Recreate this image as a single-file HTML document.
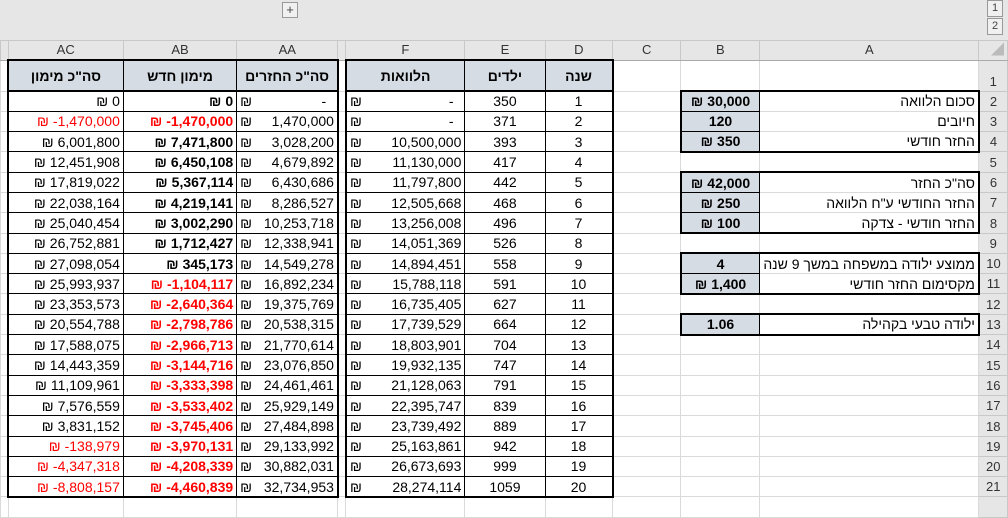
<!DOCTYPE html>
<html><head><meta charset="utf-8"><style>
body{margin:0;width:1008px;height:502px;overflow:hidden;background:#fff;font-family:"Liberation Sans",Arial,"Noto Sans CJK SC",sans-serif;position:relative}
.top{position:absolute;left:0;top:0;width:1008px;height:40px;background:#e6e6e6}
.plus{position:absolute;left:282px;top:2px;width:14px;height:14px;border:1px solid #999;background:#f0f0f0;font-size:13px;line-height:14px;text-align:center;color:#444}
.lvl{position:absolute;left:987px;width:14px;height:15px;border:1px solid #999;background:#f0f0f0;font-size:11px;line-height:15px;text-align:center;color:#444}
table{position:absolute;left:0;top:40px;border-collapse:collapse;table-layout:fixed;direction:ltr}
td{padding:0 3px;white-space:nowrap;overflow:hidden;font-size:14px;height:20.3px;border:1px solid #dadada;box-sizing:border-box;line-height:18px}
tr.h td{height:18px;background:#e6e6e6;color:#333;text-align:center;font-size:13px;border-color:#c8c8c8;border-bottom:1px solid #aaa}
tr.r1 td{height:31px}
td.n{background:#e6e6e6;text-align:center;color:#333;font-size:13px;border-color:#c8c8c8;vertical-align:bottom}
.hd{background:#d6dce4!important;font-weight:bold;text-align:center;font-size:14px}
.t{border:1px solid #000}
.R{text-align:right}.C{text-align:center}.b{font-weight:bold}.red{color:#f00}
.s{float:left}
i{font-style:normal;display:inline-block;margin-right:4px}
.BL{border-left:2px solid #000}.BR{border-right:2px solid #000}.BT{border-top:2px solid #000}.BB{border-bottom:2px solid #000}
.g{background:#d6dce4;font-weight:bold;text-align:center}
.A{text-align:right;direction:rtl}
</style></head><body>
<div class="top"></div>
<div class="plus">+</div>
<div class="lvl" style="top:0">1</div>
<div class="lvl" style="top:18px">2</div>
<table>
<colgroup><col style="width:5px"><col style="width:117px"><col style="width:115px"><col style="width:102px"><col style="width:4px"><col style="width:122px"><col style="width:83px"><col style="width:70px"><col style="width:72px"><col style="width:80px"><col style="width:209px"><col style="width:29px"></colgroup>
<tr class="h"><td></td><td>AC</td><td>AB</td><td>AA</td><td></td><td>F</td><td>E</td><td>D</td><td>C</td><td>B</td><td>A</td><td style="color:#bbb;text-align:right">◢</td></tr>
<tr class="r1"><td></td><td class="hd t BL BT BB">סה"כ מימון</td><td class="hd t BT BB">מימון חדש</td><td class="hd t BT BB BR">סה"כ החזרים</td><td></td><td class="hd t BL BT BB">הלוואות</td><td class="hd t BT BB">ילדים</td><td class="hd t BT BB BR">שנה</td><td></td><td></td><td></td><td class="n">1</td></tr>
<tr><td></td><td class="t BL R"><i>₪</i>0</td><td class="t R b"><i>₪</i>0</td><td class="t R BR"><span class="s">₪</span>-&nbsp;&nbsp;</td><td></td><td class="t BL R"><span class="s">₪</span>-&nbsp;&nbsp;</td><td class="t C">350</td><td class="t C BR">1</td><td></td><td class="g t BL BT"><i>₪</i>30,000</td><td class="A BT BR">סכום הלוואה</td><td class="n">2</td></tr>
<tr><td></td><td class="t BL R red"><i>₪</i>-1,470,000</td><td class="t R b red"><i>₪</i>-1,470,000</td><td class="t R BR"><span class="s">₪</span>1,470,000</td><td></td><td class="t BL R"><span class="s">₪</span>-&nbsp;&nbsp;</td><td class="t C">371</td><td class="t C BR">2</td><td></td><td class="g t BL">120</td><td class="A BR">חיובים</td><td class="n">3</td></tr>
<tr><td></td><td class="t BL R"><i>₪</i>6,001,800</td><td class="t R b"><i>₪</i>7,471,800</td><td class="t R BR"><span class="s">₪</span>3,028,200</td><td></td><td class="t BL R"><span class="s">₪</span>10,500,000</td><td class="t C">393</td><td class="t C BR">3</td><td></td><td class="g t BL BB"><i>₪</i>350</td><td class="A BR BB">החזר חודשי</td><td class="n">4</td></tr>
<tr><td></td><td class="t BL R"><i>₪</i>12,451,908</td><td class="t R b"><i>₪</i>6,450,108</td><td class="t R BR"><span class="s">₪</span>4,679,892</td><td></td><td class="t BL R"><span class="s">₪</span>11,130,000</td><td class="t C">417</td><td class="t C BR">4</td><td></td><td></td><td></td><td class="n">5</td></tr>
<tr><td></td><td class="t BL R"><i>₪</i>17,819,022</td><td class="t R b"><i>₪</i>5,367,114</td><td class="t R BR"><span class="s">₪</span>6,430,686</td><td></td><td class="t BL R"><span class="s">₪</span>11,797,800</td><td class="t C">442</td><td class="t C BR">5</td><td></td><td class="g t BL BT"><i>₪</i>42,000</td><td class="A BT BR">סה"כ החזר</td><td class="n">6</td></tr>
<tr><td></td><td class="t BL R"><i>₪</i>22,038,164</td><td class="t R b"><i>₪</i>4,219,141</td><td class="t R BR"><span class="s">₪</span>8,286,527</td><td></td><td class="t BL R"><span class="s">₪</span>12,505,668</td><td class="t C">468</td><td class="t C BR">6</td><td></td><td class="g t BL"><i>₪</i>250</td><td class="A BR">החזר החודשי ע"ח הלוואה</td><td class="n">7</td></tr>
<tr><td></td><td class="t BL R"><i>₪</i>25,040,454</td><td class="t R b"><i>₪</i>3,002,290</td><td class="t R BR"><span class="s">₪</span>10,253,718</td><td></td><td class="t BL R"><span class="s">₪</span>13,256,008</td><td class="t C">496</td><td class="t C BR">7</td><td></td><td class="g t BL BB"><i>₪</i>100</td><td class="A BR BB">החזר חודשי - צדקה</td><td class="n">8</td></tr>
<tr><td></td><td class="t BL R"><i>₪</i>26,752,881</td><td class="t R b"><i>₪</i>1,712,427</td><td class="t R BR"><span class="s">₪</span>12,338,941</td><td></td><td class="t BL R"><span class="s">₪</span>14,051,369</td><td class="t C">526</td><td class="t C BR">8</td><td></td><td></td><td></td><td class="n">9</td></tr>
<tr><td></td><td class="t BL R"><i>₪</i>27,098,054</td><td class="t R b"><i>₪</i>345,173</td><td class="t R BR"><span class="s">₪</span>14,549,278</td><td></td><td class="t BL R"><span class="s">₪</span>14,894,451</td><td class="t C">558</td><td class="t C BR">9</td><td></td><td class="g t BL BT">4</td><td class="A BT BR">ממוצע ילודה במשפחה במשך 9 שנה</td><td class="n">10</td></tr>
<tr><td></td><td class="t BL R"><i>₪</i>25,993,937</td><td class="t R b red"><i>₪</i>-1,104,117</td><td class="t R BR"><span class="s">₪</span>16,892,234</td><td></td><td class="t BL R"><span class="s">₪</span>15,788,118</td><td class="t C">591</td><td class="t C BR">10</td><td></td><td class="g t BL BB"><i>₪</i>1,400</td><td class="A BR BB">מקסימום החזר חודשי</td><td class="n">11</td></tr>
<tr><td></td><td class="t BL R"><i>₪</i>23,353,573</td><td class="t R b red"><i>₪</i>-2,640,364</td><td class="t R BR"><span class="s">₪</span>19,375,769</td><td></td><td class="t BL R"><span class="s">₪</span>16,735,405</td><td class="t C">627</td><td class="t C BR">11</td><td></td><td></td><td></td><td class="n">12</td></tr>
<tr><td></td><td class="t BL R"><i>₪</i>20,554,788</td><td class="t R b red"><i>₪</i>-2,798,786</td><td class="t R BR"><span class="s">₪</span>20,538,315</td><td></td><td class="t BL R"><span class="s">₪</span>17,739,529</td><td class="t C">664</td><td class="t C BR">12</td><td></td><td class="g t BL BT BB">1.06</td><td class="A BT BR BB">ילודה טבעי בקהילה</td><td class="n">13</td></tr>
<tr><td></td><td class="t BL R"><i>₪</i>17,588,075</td><td class="t R b red"><i>₪</i>-2,966,713</td><td class="t R BR"><span class="s">₪</span>21,770,614</td><td></td><td class="t BL R"><span class="s">₪</span>18,803,901</td><td class="t C">704</td><td class="t C BR">13</td><td></td><td></td><td></td><td class="n">14</td></tr>
<tr><td></td><td class="t BL R"><i>₪</i>14,443,359</td><td class="t R b red"><i>₪</i>-3,144,716</td><td class="t R BR"><span class="s">₪</span>23,076,850</td><td></td><td class="t BL R"><span class="s">₪</span>19,932,135</td><td class="t C">747</td><td class="t C BR">14</td><td></td><td></td><td></td><td class="n">15</td></tr>
<tr><td></td><td class="t BL R"><i>₪</i>11,109,961</td><td class="t R b red"><i>₪</i>-3,333,398</td><td class="t R BR"><span class="s">₪</span>24,461,461</td><td></td><td class="t BL R"><span class="s">₪</span>21,128,063</td><td class="t C">791</td><td class="t C BR">15</td><td></td><td></td><td></td><td class="n">16</td></tr>
<tr><td></td><td class="t BL R"><i>₪</i>7,576,559</td><td class="t R b red"><i>₪</i>-3,533,402</td><td class="t R BR"><span class="s">₪</span>25,929,149</td><td></td><td class="t BL R"><span class="s">₪</span>22,395,747</td><td class="t C">839</td><td class="t C BR">16</td><td></td><td></td><td></td><td class="n">17</td></tr>
<tr><td></td><td class="t BL R"><i>₪</i>3,831,152</td><td class="t R b red"><i>₪</i>-3,745,406</td><td class="t R BR"><span class="s">₪</span>27,484,898</td><td></td><td class="t BL R"><span class="s">₪</span>23,739,492</td><td class="t C">889</td><td class="t C BR">17</td><td></td><td></td><td></td><td class="n">18</td></tr>
<tr><td></td><td class="t BL R red"><i>₪</i>-138,979</td><td class="t R b red"><i>₪</i>-3,970,131</td><td class="t R BR"><span class="s">₪</span>29,133,992</td><td></td><td class="t BL R"><span class="s">₪</span>25,163,861</td><td class="t C">942</td><td class="t C BR">18</td><td></td><td></td><td></td><td class="n">19</td></tr>
<tr><td></td><td class="t BL R red"><i>₪</i>-4,347,318</td><td class="t R b red"><i>₪</i>-4,208,339</td><td class="t R BR"><span class="s">₪</span>30,882,031</td><td></td><td class="t BL R"><span class="s">₪</span>26,673,693</td><td class="t C">999</td><td class="t C BR">19</td><td></td><td></td><td></td><td class="n">20</td></tr>
<tr><td></td><td class="t BL BB R red"><i>₪</i>-8,808,157</td><td class="t BB R b red"><i>₪</i>-4,460,839</td><td class="t BB R BR"><span class="s">₪</span>32,734,953</td><td></td><td class="t BL BB R"><span class="s">₪</span>28,274,114</td><td class="t BB C">1059</td><td class="t BB C BR">20</td><td></td><td></td><td></td><td class="n">21</td></tr>
<tr><td></td><td></td><td></td><td></td><td></td><td></td><td></td><td></td><td></td><td></td><td></td><td class="n"></td></tr>
</table>
</body></html>
